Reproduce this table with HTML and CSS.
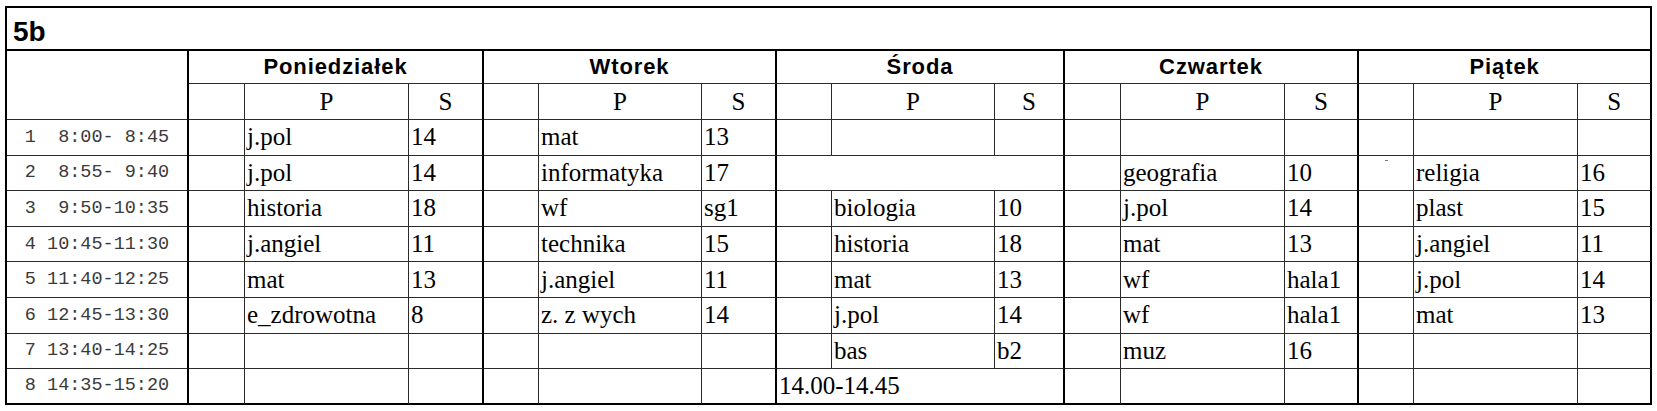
FILE: index.html
```html
<!DOCTYPE html>
<html lang="pl">
<head>
<meta charset="utf-8">
<title>5b</title>
<link rel="stylesheet" href="styles.css">
</head>
<body>
<table class="plan">
  <colgroup>
    <col class="c-time">
    <col class="c-e"><col class="c-p"><col class="c-s">
    <col class="c-e2"><col class="c-p2"><col class="c-s">
    <col class="c-e2"><col class="c-p2"><col class="c-s3">
    <col class="c-e"><col class="c-p"><col class="c-s4">
    <col class="c-e2"><col class="c-p"><col class="c-s4">
  </colgroup>
  <tr class="r-title"><td class="title end" colspan="16">5b</td></tr>
  <tr class="r-day">
    <td class="corner tk" rowspan="2"></td>
    <th class="day tk" colspan="3">Poniedziałek</th>
    <th class="day tk" colspan="3">Wtorek</th>
    <th class="day tk" colspan="3">Środa</th>
    <th class="day tk" colspan="3">Czwartek</th>
    <th class="day tk" colspan="3">Piątek</th>
  </tr>
  <tr class="r-ps">
    <td></td><td class="hd">P</td><td class="hd tk">S</td>
    <td></td><td class="hd">P</td><td class="hd tk">S</td>
    <td></td><td class="hd">P</td><td class="hd tk">S</td>
    <td></td><td class="hd">P</td><td class="hd tk">S</td>
    <td></td><td class="hd">P</td><td class="hd tk">S</td>
  </tr>
  <tr class="r">
    <td class="nr tk">1  8:00- 8:45</td>
    <td></td><td>j.pol</td><td class="tk">14</td>
    <td></td><td>mat</td><td class="tk">13</td>
    <td></td><td></td><td class="tk"></td>
    <td></td><td></td><td class="tk"></td>
    <td></td><td></td><td class="tk"></td>
  </tr>
  <tr class="r">
    <td class="nr tk">2  8:55- 9:40</td>
    <td></td><td>j.pol</td><td class="tk">14</td>
    <td></td><td>informatyka</td><td class="tk">17</td>
    <td class="tk" colspan="3"></td>
    <td></td><td>geografia</td><td class="tk">10</td>
    <td class="marked"><span class="tick"></span></td><td>religia</td><td class="tk">16</td>
  </tr>
  <tr class="r">
    <td class="nr tk">3  9:50-10:35</td>
    <td></td><td>historia</td><td class="tk">18</td>
    <td></td><td>wf</td><td class="tk">sg1</td>
    <td></td><td>biologia</td><td class="tk">10</td>
    <td></td><td>j.pol</td><td class="tk">14</td>
    <td></td><td>plast</td><td class="tk">15</td>
  </tr>
  <tr class="r">
    <td class="nr tk">4 10:45-11:30</td>
    <td></td><td>j.angiel</td><td class="tk">11</td>
    <td></td><td>technika</td><td class="tk">15</td>
    <td></td><td>historia</td><td class="tk">18</td>
    <td></td><td>mat</td><td class="tk">13</td>
    <td></td><td>j.angiel</td><td class="tk">11</td>
  </tr>
  <tr class="r">
    <td class="nr tk">5 11:40-12:25</td>
    <td></td><td>mat</td><td class="tk">13</td>
    <td></td><td>j.angiel</td><td class="tk">11</td>
    <td></td><td>mat</td><td class="tk">13</td>
    <td></td><td>wf</td><td class="tk">hala1</td>
    <td></td><td>j.pol</td><td class="tk">14</td>
  </tr>
  <tr class="r">
    <td class="nr tk">6 12:45-13:30</td>
    <td></td><td>e_zdrowotna</td><td class="tk">8</td>
    <td></td><td>z. z wych</td><td class="tk">14</td>
    <td></td><td>j.pol</td><td class="tk">14</td>
    <td></td><td>wf</td><td class="tk">hala1</td>
    <td></td><td>mat</td><td class="tk">13</td>
  </tr>
  <tr class="r">
    <td class="nr tk">7 13:40-14:25</td>
    <td></td><td></td><td class="tk"></td>
    <td></td><td></td><td class="tk"></td>
    <td></td><td>bas</td><td class="tk">b2</td>
    <td></td><td>muz</td><td class="tk">16</td>
    <td></td><td></td><td class="tk"></td>
  </tr>
  <tr class="r last">
    <td class="nr tk">8 14:35-15:20</td>
    <td></td><td></td><td class="tk"></td>
    <td></td><td></td><td class="tk"></td>
    <td class="tk" colspan="3">14.00-14.45</td>
    <td></td><td></td><td class="tk"></td>
    <td></td><td></td><td class="tk"></td>
  </tr>
</table>
</body>
</html>
```

FILE: styles.css
```css
html, body {
  background: #ffffff;
}
body {
  margin: 6px 0 0 5px;
}
*, *::before, *::after {
  box-sizing: border-box;
}
.plan {
  table-layout: fixed;
  width: 1647px;
  border-collapse: separate;
  border-spacing: 0;
  border-left: 2px solid #000;
  border-top: 2px solid #000;
  font-family: "Liberation Serif", "Times New Roman", serif;
  font-size: 25px;
  color: #000;
}
.c-time { width: 182px; }
.c-e { width: 56px; }
.c-e2 { width: 55px; }
.c-p { width: 164px; }
.c-p2 { width: 163px; }
.c-s { width: 75px; }
.c-s3 { width: 70px; }
.c-s4 { width: 74px; }

.plan td, .plan th {
  border-right: 1px solid #2b2b2b;
  border-bottom: 1px solid #2b2b2b;
  padding: 0 0 0 2px;
  vertical-align: middle;
  text-align: left;
  white-space: nowrap;
  overflow: hidden;
  font-weight: normal;
}
.plan td.tk, .plan th.tk {
  border-right: 2px solid #000;
}
.plan td.end {
  border-right: 2px solid #000;
  border-bottom: 2px solid #000;
}
.r-title { height: 43px; }
.r-day { height: 33px; }
.r-ps { height: 36px; }
.r { height: 35.6px; }
.plan .last td {
  border-bottom: 2px solid #000;
}
.plan td.title {
  font-family: "Liberation Sans", Arial, sans-serif;
  font-weight: bold;
  font-size: 28px;
  vertical-align: bottom;
  padding: 0 0 1px 6px;
  line-height: normal;
}
.plan th.day {
  font-family: "Liberation Sans", Arial, sans-serif;
  font-weight: bold;
  font-size: 22px;
  letter-spacing: 0.9px;
  text-align: center;
  padding: 0;
}
.plan td.hd {
  text-align: center;
  padding: 0;
}
.plan td.nr {
  font-family: "Liberation Mono", "Courier New", monospace;
  font-size: 18.5px;
  color: #3a3a3a;
  white-space: pre;
  text-align: center;
  padding: 0;
}
.plan td.marked {
  vertical-align: top;
  padding: 4px 0 0 26px;
}
.tick {
  display: block;
  width: 3px;
  height: 1px;
  background: #777;
}
```
